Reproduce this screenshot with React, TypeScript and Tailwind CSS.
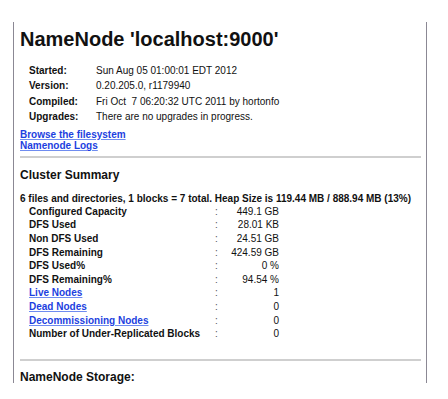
import React from "react";

const info: [string, string][] = [
  ["Started:", "Sun Aug 05 01:00:01 EDT 2012"],
  ["Version:", "0.20.205.0, r1179940"],
  ["Compiled:", "Fri Oct  7 06:20:32 UTC 2011 by hortonfo"],
  ["Upgrades:", "There are no upgrades in progress."],
];

const rows: { label: string; value: string; link?: boolean }[] = [
  { label: "Configured Capacity", value: "449.1 GB" },
  { label: "DFS Used", value: "28.01 KB" },
  { label: "Non DFS Used", value: "24.51 GB" },
  { label: "DFS Remaining", value: "424.59 GB" },
  { label: "DFS Used%", value: "0 %" },
  { label: "DFS Remaining%", value: "94.54 %" },
  { label: "Live Nodes", value: "1", link: true },
  { label: "Dead Nodes", value: "0", link: true },
  { label: "Decommissioning Nodes", value: "0", link: true },
  { label: "Number of Under-Replicated Blocks", value: "0" },
];

export default function App() {
  return (
    <div className="w-[448px] h-[399px] bg-white overflow-hidden pt-[22px] font-['Liberation_Sans',Arial,sans-serif] text-[#111]">
      <div className="ml-[13px] w-[414px] h-[361px] border-l border-r border-[#8b8894] pt-[5px] pl-[6px] pr-[5px]">
        <h1 className="text-[20px] leading-[24px] font-bold">NameNode 'localhost:9000'</h1>

        <div className="mt-[11.5px] ml-[9px] text-[10px]">
          {info.map(([k, v]) => (
            <div key={k} className="flex h-[15.5px] leading-[15.5px]">
              <div className="w-[67px] font-bold">{k}</div>
              <div className="whitespace-pre">{v}</div>
            </div>
          ))}
        </div>

        <div className="mt-[4.3px] text-[10px] leading-[11.5px] font-bold">
          <div>
            <a href="#" className="text-[#1d3fe0] underline decoration-[#6f8cf0]">Browse the filesystem</a>
          </div>
          <div>
            <a href="#" className="text-[#1d3fe0] underline decoration-[#6f8cf0]">Namenode Logs</a>
          </div>
        </div>

        <div className="mt-[4px] h-[2px] bg-[#cfcfcf]" />

        <h2 className="mt-[10px] text-[12px] leading-[14px] font-bold">Cluster Summary</h2>

        <div className="mt-[10px] text-[10px] leading-[13px] font-bold">
          6 files and directories, 1 blocks = 7 total. Heap Size is 119.44 MB / 888.94 MB (13%)
        </div>

        <div className="ml-[9px] text-[10px]">
          {rows.map((r) => (
            <div key={r.label} className="flex h-[13.6px] leading-[13.6px]">
              <div className="w-[186px] font-bold">
                {r.link ? (
                  <a href="#" className="text-[#1d3fe0] underline decoration-[#6f8cf0]">{r.label}</a>
                ) : (
                  r.label
                )}
              </div>
              <div className="w-[12px] text-[#555]">:</div>
              <div className="w-[52px] text-right">{r.value}</div>
            </div>
          ))}
        </div>

        <div className="mt-[18px] h-[2px] bg-[#cfcfcf]" />

        <h2 className="mt-[9.5px] text-[12px] leading-[14px] font-bold">NameNode Storage:</h2>
      </div>
    </div>
  );
}
